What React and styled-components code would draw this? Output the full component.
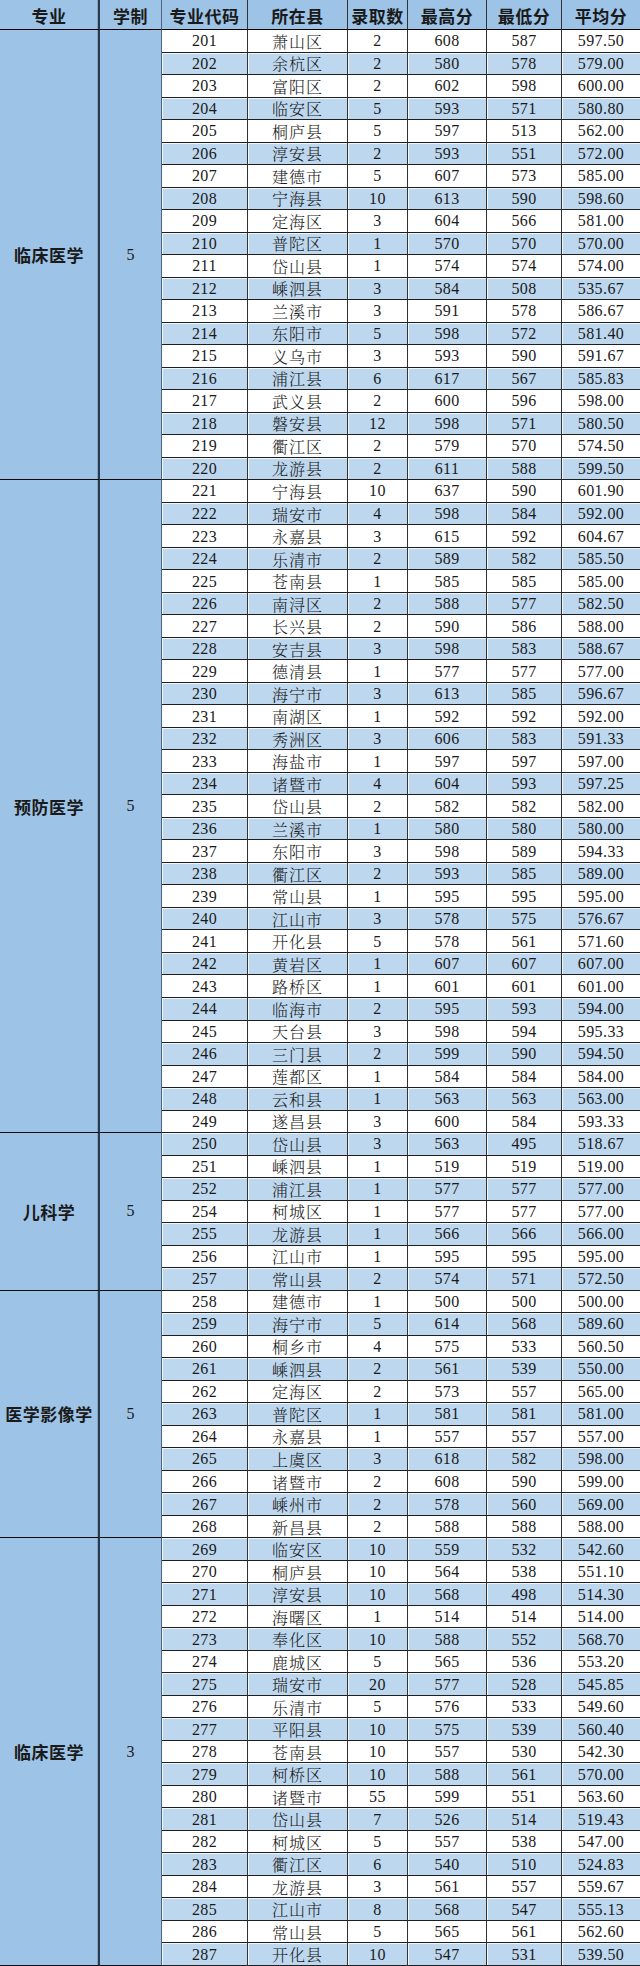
import React from "react";
import styled, { createGlobalStyle, css } from "styled-components";

const GlobalStyle = createGlobalStyle`
  html, body { margin: 0; padding: 0; background: #ffffff; }
  body { font-family: "Liberation Serif", "Noto Serif CJK SC", "Noto Sans CJK SC", serif; }
`;

const BLUE = "#9dc3e6";
const STRIPE = "#bdd7ee";
const LINE = "#1f1f1f";

const groups = [
  {
    name: "临床医学",
    years: "5",
    rows: [
      ["201", "萧山区", "2", "608", "587", "597.50"],
      ["202", "余杭区", "2", "580", "578", "579.00"],
      ["203", "富阳区", "2", "602", "598", "600.00"],
      ["204", "临安区", "5", "593", "571", "580.80"],
      ["205", "桐庐县", "5", "597", "513", "562.00"],
      ["206", "淳安县", "2", "593", "551", "572.00"],
      ["207", "建德市", "5", "607", "573", "585.00"],
      ["208", "宁海县", "10", "613", "590", "598.60"],
      ["209", "定海区", "3", "604", "566", "581.00"],
      ["210", "普陀区", "1", "570", "570", "570.00"],
      ["211", "岱山县", "1", "574", "574", "574.00"],
      ["212", "嵊泗县", "3", "584", "508", "535.67"],
      ["213", "兰溪市", "3", "591", "578", "586.67"],
      ["214", "东阳市", "5", "598", "572", "581.40"],
      ["215", "义乌市", "3", "593", "590", "591.67"],
      ["216", "浦江县", "6", "617", "567", "585.83"],
      ["217", "武义县", "2", "600", "596", "598.00"],
      ["218", "磐安县", "12", "598", "571", "580.50"],
      ["219", "衢江区", "2", "579", "570", "574.50"],
      ["220", "龙游县", "2", "611", "588", "599.50"],
    ],
  },
  {
    name: "预防医学",
    years: "5",
    rows: [
      ["221", "宁海县", "10", "637", "590", "601.90"],
      ["222", "瑞安市", "4", "598", "584", "592.00"],
      ["223", "永嘉县", "3", "615", "592", "604.67"],
      ["224", "乐清市", "2", "589", "582", "585.50"],
      ["225", "苍南县", "1", "585", "585", "585.00"],
      ["226", "南浔区", "2", "588", "577", "582.50"],
      ["227", "长兴县", "2", "590", "586", "588.00"],
      ["228", "安吉县", "3", "598", "583", "588.67"],
      ["229", "德清县", "1", "577", "577", "577.00"],
      ["230", "海宁市", "3", "613", "585", "596.67"],
      ["231", "南湖区", "1", "592", "592", "592.00"],
      ["232", "秀洲区", "3", "606", "583", "591.33"],
      ["233", "海盐市", "1", "597", "597", "597.00"],
      ["234", "诸暨市", "4", "604", "593", "597.25"],
      ["235", "岱山县", "2", "582", "582", "582.00"],
      ["236", "兰溪市", "1", "580", "580", "580.00"],
      ["237", "东阳市", "3", "598", "589", "594.33"],
      ["238", "衢江区", "2", "593", "585", "589.00"],
      ["239", "常山县", "1", "595", "595", "595.00"],
      ["240", "江山市", "3", "578", "575", "576.67"],
      ["241", "开化县", "5", "578", "561", "571.60"],
      ["242", "黄岩区", "1", "607", "607", "607.00"],
      ["243", "路桥区", "1", "601", "601", "601.00"],
      ["244", "临海市", "2", "595", "593", "594.00"],
      ["245", "天台县", "3", "598", "594", "595.33"],
      ["246", "三门县", "2", "599", "590", "594.50"],
      ["247", "莲都区", "1", "584", "584", "584.00"],
      ["248", "云和县", "1", "563", "563", "563.00"],
      ["249", "遂昌县", "3", "600", "584", "593.33"],
    ],
  },
  {
    name: "儿科学",
    years: "5",
    rows: [
      ["250", "岱山县", "3", "563", "495", "518.67"],
      ["251", "嵊泗县", "1", "519", "519", "519.00"],
      ["252", "浦江县", "1", "577", "577", "577.00"],
      ["254", "柯城区", "1", "577", "577", "577.00"],
      ["255", "龙游县", "1", "566", "566", "566.00"],
      ["256", "江山市", "1", "595", "595", "595.00"],
      ["257", "常山县", "2", "574", "571", "572.50"],
    ],
  },
  {
    name: "医学影像学",
    years: "5",
    rows: [
      ["258", "建德市", "1", "500", "500", "500.00"],
      ["259", "海宁市", "5", "614", "568", "589.60"],
      ["260", "桐乡市", "4", "575", "533", "560.50"],
      ["261", "嵊泗县", "2", "561", "539", "550.00"],
      ["262", "定海区", "2", "573", "557", "565.00"],
      ["263", "普陀区", "1", "581", "581", "581.00"],
      ["264", "永嘉县", "1", "557", "557", "557.00"],
      ["265", "上虞区", "3", "618", "582", "598.00"],
      ["266", "诸暨市", "2", "608", "590", "599.00"],
      ["267", "嵊州市", "2", "578", "560", "569.00"],
      ["268", "新昌县", "2", "588", "588", "588.00"],
    ],
  },
  {
    name: "临床医学",
    years: "3",
    rows: [
      ["269", "临安区", "10", "559", "532", "542.60"],
      ["270", "桐庐县", "10", "564", "538", "551.10"],
      ["271", "淳安县", "10", "568", "498", "514.30"],
      ["272", "海曙区", "1", "514", "514", "514.00"],
      ["273", "奉化区", "10", "588", "552", "568.70"],
      ["274", "鹿城区", "5", "565", "536", "553.20"],
      ["275", "瑞安市", "20", "577", "528", "545.85"],
      ["276", "乐清市", "5", "576", "533", "549.60"],
      ["277", "平阳县", "10", "575", "539", "560.40"],
      ["278", "苍南县", "10", "557", "530", "542.30"],
      ["279", "柯桥区", "10", "588", "561", "570.00"],
      ["280", "诸暨市", "55", "599", "551", "563.60"],
      ["281", "岱山县", "7", "526", "514", "519.43"],
      ["282", "柯城区", "5", "557", "538", "547.00"],
      ["283", "衢江区", "6", "540", "510", "524.83"],
      ["284", "龙游县", "3", "561", "557", "559.67"],
      ["285", "江山市", "8", "568", "547", "555.13"],
      ["286", "常山县", "5", "565", "561", "562.60"],
      ["287", "开化县", "10", "547", "531", "539.50"],
    ],
  },
];

const headers = ["专业", "学制", "专业代码", "所在县", "录取数", "最高分", "最低分", "平均分"];
const totalRows = groups.reduce((n, g) => n + g.rows.length, 0);

const Sheet = styled.div`
  display: grid;
  width: 640px;
  height: 1966px;
  grid-template-columns: 100px 62px 86px 100px 60px 79px 75px 78px;
  grid-template-rows: 30px repeat(${(p) => p.$rows}, 1fr);
  background: #ffffff;
  box-sizing: border-box;
`;

const cellBase = css`
  box-sizing: border-box;
  display: flex;
  align-items: center;
  justify-content: center;
  overflow: hidden;
  white-space: nowrap;
  border-bottom: 1px solid ${LINE};
  color: #1a1a1a;
`;

const dividerRight = css`
  ${(p) =>
    p.$col === 0
      ? css`
          border-right: 2px solid #2c3b4c;
          box-shadow: inset -1px 0 0 #7fa3c6;
        `
      : p.$col === 1
      ? css`
          border-right: 1px solid #4d6580;
        `
      : p.$col === 7
      ? css`
          border-right: none;
        `
      : css`
          border-right: 1px solid #333333;
        `}
`;

const HeadCell = styled.div`
  ${cellBase}
  ${dividerRight}
  background: ${BLUE};
  border-bottom-color: #000000;
  font-family: "Noto Sans CJK SC", "Noto Sans", sans-serif;
  font-weight: 700;
  font-size: 17px;
  letter-spacing: 0.5px;
  padding-top: 1px;
`;

const GroupCell = styled.div`
  ${cellBase}
  ${dividerRight}
  grid-row: span ${(p) => p.$span};
  background: ${BLUE};
  border-bottom-color: #0a0a0a;
  font-family: ${(p) =>
    p.$bold
      ? `"Noto Sans CJK SC", "Noto Sans", sans-serif`
      : `"Liberation Serif", "Noto Sans CJK SC", serif`};
  font-weight: ${(p) => (p.$bold ? 700 : 400)};
  font-size: ${(p) => (p.$bold ? "17px" : "16px")};
  letter-spacing: ${(p) => (p.$bold ? "0.5px" : "0")};
`;

const DataCell = styled.div`
  ${cellBase}
  ${dividerRight}
  background: ${(p) => (p.$striped ? STRIPE : "#ffffff")};
  box-shadow: ${(p) => (p.$striped ? "inset 1px 1px 0 #eef5fb" : "none")};
  font-family: ${(p) =>
    p.$cjk
      ? `"Noto Serif CJK SC", "Noto Sans CJK SC", sans-serif`
      : `"Liberation Serif", "Noto Serif CJK SC", serif`};
  font-size: 16px;
  letter-spacing: ${(p) => (p.$cjk ? "1px" : "0.4px")};
  font-weight: ${(p) => (p.$cjk ? 300 : 400)};
  padding-top: 1px;
`;

export default function App() {
  let index = 0;
  const cells = [];
  headers.forEach((h, i) => {
    cells.push(
      <HeadCell key={`h${i}`} $col={i}>
        {h}
      </HeadCell>
    );
  });
  groups.forEach((g, gi) => {
    g.rows.forEach((row, ri) => {
      if (ri === 0) {
        cells.push(
          <GroupCell key={`g${gi}n`} $col={0} $span={g.rows.length} $bold>
            {g.name}
          </GroupCell>
        );
        cells.push(
          <GroupCell key={`g${gi}y`} $col={1} $span={g.rows.length}>
            {g.years}
          </GroupCell>
        );
      }
      const striped = index % 2 === 1;
      row.forEach((v, ci) => {
        cells.push(
          <DataCell
            key={`r${index}c${ci}`}
            $col={ci + 2}
            $striped={striped}
            $cjk={ci === 1}
          >
            {v}
          </DataCell>
        );
      });
      index += 1;
    });
  });
  return (
    <>
      <GlobalStyle />
      <Sheet $rows={totalRows}>{cells}</Sheet>
    </>
  );
}
